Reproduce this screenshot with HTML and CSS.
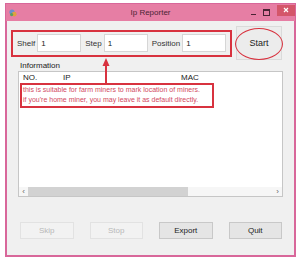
FILE: index.html
```html
<!DOCTYPE html>
<html lang="en">
<head>
  <meta charset="UTF-8" />
  <title>Ip Reporter</title>
  <link rel="stylesheet" href="styles.css">
</head>
<body>
  <div class="window">
    <div class="titlebar">
      <svg class="app-icon" width="8" height="8" viewBox="0 0 8 8">
        <circle cx="3" cy="3" r="2.6" fill="#6a8fd0"/>
        <circle cx="5.2" cy="5.2" r="2.4" fill="#e0a040"/>
        <circle cx="2.6" cy="5.6" r="1.6" fill="#58a060"/>
      </svg>
      <span class="title">Ip Reporter</span>
      <div class="controls">
        <span class="ctl min"></span>
        <span class="ctl max"></span>
        <span class="ctl close">
          <svg width="6" height="6" viewBox="0 0 6 6"><path d="M1 1L5 5M5 1L1 5" stroke="#fff" stroke-width="1.2"/></svg>
        </span>
      </div>
    </div>

    <div class="client">
      <div class="top-row">
        <div class="fields">
          <label class="field-label">Shelf</label><input class="field" value="1">
          <label class="field-label">Step</label><input class="field" value="1">
          <label class="field-label">Position</label><input class="field" value="1">
        </div>
        <div class="start-wrap">
          <button class="btn start">Start</button>
          <span class="ring"></span>
        </div>
      </div>

      <div class="info-label">Information</div>
      <div class="listbox">
        <div class="list-head">
          <span class="col-no">NO.</span>
          <span class="col-ip">IP</span>
          <span class="col-mac">MAC</span>
        </div>
        <div class="list-body"></div>
        <div class="hscroll">
          <span class="arrow">&lsaquo;</span>
          <span class="track"><span class="thumb"></span></span>
          <span class="arrow">&rsaquo;</span>
        </div>
        <div class="note">
          this is suitable for farm miners to mark location of miners.<br>
          if you're home miner, you may leave it as default directly.
        </div>
      </div>

      <div class="buttons">
        <button class="btn" disabled>Skip</button>
        <button class="btn" disabled>Stop</button>
        <button class="btn">Export</button>
        <button class="btn">Quit</button>
      </div>

      <svg class="pointer" width="8" height="26" viewBox="0 0 8 26">
        <path d="M4 0L7.5 8H0.5Z" fill="#d8323f"/>
        <rect x="3" y="6" width="2" height="20" fill="#d8323f"/>
      </svg>
    </div>
  </div>
</body>
</html>
```

FILE: styles.css
```css
:root {
  --frame: #e67ea4;
  --frame-dark: #d8679a;
  --mark: #d8323f;
  --face: #f0f0f0;
}

body {
  margin: 0;
  background: #fff;
  font-family: "Liberation Sans", Arial, sans-serif;
  color: #222;
}

.window {
  margin: 3px 0 0 5px;
  width: 289px;
  height: 252px;
  border: 1px solid var(--frame-dark);
  background: var(--face);
  display: flex;
  flex-direction: column;
}

.titlebar {
  height: 17px;
  background: var(--frame);
  display: flex;
  align-items: center;
  position: relative;
}

.app-icon {
  margin-left: 3px;
}

.title {
  position: absolute;
  left: 0;
  right: 0;
  text-align: center;
  font-size: 8px;
  color: #4a2434;
}

.controls {
  margin-left: auto;
  display: flex;
  align-items: center;
  gap: 7px;
  height: 100%;
}

.ctl.min {
  width: 5px;
  height: 1px;
  background: #4a2434;
  margin-top: 3px;
}

.ctl.max {
  width: 5px;
  height: 4px;
  border: 1px solid #4a2434;
  border-top-width: 2px;
}

.ctl.close {
  width: 18px;
  height: 11px;
  margin-top: -5px;
  background: #d4566a;
  display: flex;
  align-items: center;
  justify-content: center;
}

.client {
  flex: 1;
  position: relative;
  border-style: solid;
  border-color: var(--frame-dark);
  border-width: 0 1px 1px 1px;
  padding: 5px 12px 0 4px;
  display: flex;
  flex-direction: column;
}

.top-row {
  display: flex;
  align-items: center;
  gap: 2px;
}

.fields {
  display: flex;
  align-items: center;
  width: 215px;
  height: 23px;
  border: 2px solid var(--mark);
  padding: 0 2px;
  font-size: 8px;
}

.field-label {
  color: #333;
  padding: 0 2px;
}

.field {
  width: 44px;
  height: 18px;
  box-sizing: border-box;
  border: 1px solid #d6d6d6;
  background: #fff;
  font: inherit;
  color: #222;
  padding: 0 3px;
  margin-right: 1px;
  flex: none;
}

.field:nth-of-type(1),
.field:nth-of-type(2) {
  margin-right: 2px;
}

.start-wrap {
  position: relative;
  margin-left: 2px;
}

.btn {
  font-family: inherit;
  font-size: 8px;
  color: #222;
  background: #e5e5e5;
  border: 1px solid #c8c8c8;
  width: 54px;
  height: 17px;
  padding: 0;
}

.btn:disabled {
  background: #f2f2f2;
  border-color: #e2e2e2;
  color: #b8b8b8;
}

.btn.start {
  width: 46px;
  height: 34px;
  background: #ececec;
  border-color: #dadada;
  font-size: 9px;
}

.ring {
  position: absolute;
  inset: 2px -1px 0 -1px;
  border: 1.5px solid var(--mark);
  border-radius: 50%;
}

.info-label {
  font-size: 8px;
  margin: 1px 0 0 9px;
  line-height: 10px;
}

.listbox {
  position: relative;
  margin: 0 0 0 7px;
  width: 263px;
  height: 124px;
  border: 1px solid #c6c6c6;
  background: #fff;
  display: flex;
  flex-direction: column;
}

.list-head {
  display: flex;
  font-size: 8px;
  line-height: 11px;
  color: #222;
}

.col-no { margin-left: 4px; width: 40px; }
.col-ip { width: 118px; }

.list-body {
  flex: 1;
}

.hscroll {
  height: 9px;
  display: flex;
  align-items: center;
  background: #f6f6f6;
}

.arrow {
  width: 9px;
  text-align: center;
  font-size: 8px;
  color: #666;
  line-height: 9px;
}

.track {
  flex: 1;
  height: 100%;
}

.thumb {
  display: block;
  width: 160px;
  height: 100%;
  background: #d2d2d2;
}

.note {
  position: absolute;
  left: 1px;
  top: 11px;
  width: 189px;
  height: 21px;
  border: 2px solid var(--mark);
  padding: 0 0 0 1px;
  font-size: 7px;
  line-height: 10px;
  color: #d24a62;
  white-space: nowrap;
}

.buttons {
  display: flex;
  gap: 16px;
  margin: 25px 0 0 9px;
}

.pointer {
  position: absolute;
  left: 95px;
  top: 37px;
}
```
